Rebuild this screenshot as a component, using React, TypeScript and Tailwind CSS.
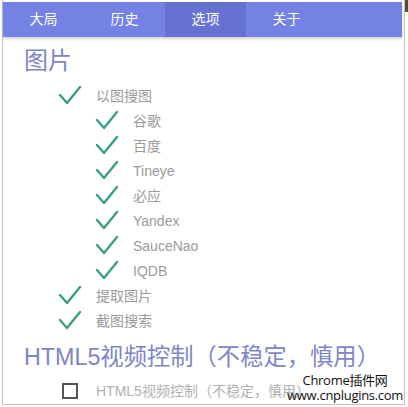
import React from "react";

const CJK = '"Liberation Sans", "Noto Sans CJK SC", sans-serif';

function Check() {
  return (
    <svg width="22" height="18" viewBox="0 0 22 18" className="shrink-0 overflow-visible">
      <polyline points="1,8 8,16 21,0" fill="none" stroke="#3b9e87" strokeWidth="2.4" strokeLinecap="round" strokeLinejoin="round" />
    </svg>
  );
}

function Row({ level, label }: { level: 1 | 2; label: string }) {
  return (
    <div className={`flex h-[25px] items-center ${level === 1 ? "pl-[56px]" : "pl-[93px]"}`}>
      <Check />
      <span className="ml-[15px] text-[14px] leading-none text-[#9a9a9a]">{label}</span>
    </div>
  );
}

export default function App() {
  const tabs = ["大局", "历史", "选项", "关于"];
  const rows: [1 | 2, string][] = [
    [1, "以图搜图"],
    [2, "谷歌"],
    [2, "百度"],
    [2, "Tineye"],
    [2, "必应"],
    [2, "Yandex"],
    [2, "SauceNao"],
    [2, "IQDB"],
    [1, "提取图片"],
    [1, "截图搜索"],
  ];
  return (
    <div className="relative h-[407px] w-[408px] bg-white" style={{ fontFamily: CJK }}>
      <div className="ml-[2px] h-[405px] w-[403px] border-x border-b border-[#c4c4c4] pt-[2px]">
        <div className="flex h-[35px] w-[399px] bg-[#7382e3] shadow-[0_2px_3px_rgba(0,0,0,0.18)]">
          {tabs.map((t, i) => (
            <div
              key={t}
              className={`flex w-[81px] items-center justify-center text-[14px] text-white ${i === 2 ? "bg-[#6572d2]" : ""}`}
            >
              {t}
            </div>
          ))}
        </div>
        <div className="mt-[8px] h-[32px] pl-[21px] text-[24px] leading-[32px] text-[#7e85c7]">图片</div>
        <div className="mt-[6px]">
          {rows.map(([l, s], i) => (
            <Row key={i} level={l} label={s} />
          ))}
        </div>
        <div className="mt-[8px] h-[32px] whitespace-nowrap pl-[21px] text-[23.3px] leading-[32px] text-[#7e85c7]">
          HTML5视频控制（不稳定，慎用）
        </div>
        <div className="mt-[5px] flex h-[25px] items-center pl-[59px]">
          <div className="h-[16px] w-[16px] shrink-0 border-2 border-[#555]" />
          <span className="ml-[18px] whitespace-nowrap text-[14px] leading-none text-[#b0b0b0]">HTML5视频控制（不稳定，慎用）</span>
        </div>
      </div>
      <div className="absolute right-0 top-0 h-[12px] w-[3px] bg-[#5b4b3c]" />
      <div
        className="absolute bottom-[4px] right-[5px] flex flex-col items-center text-[13px] leading-[15px] tracking-[-0.3px] text-[#111]"
        style={{ fontFamily: '"Open Sans", "Noto Sans CJK SC", sans-serif' }}
      >
        <span>Chrome插件网</span>
        <span>www.cnplugins.com</span>
      </div>
    </div>
  );
}
